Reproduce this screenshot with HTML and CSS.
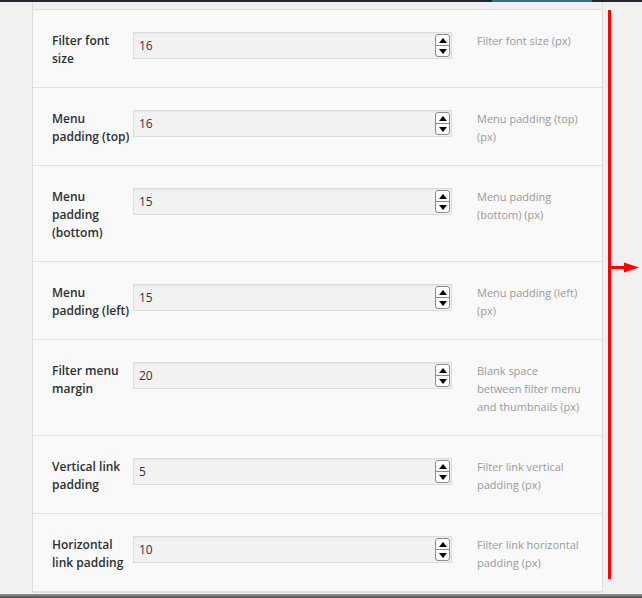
FILE: index.html
```html
<!DOCTYPE html>
<html>
<head>
<meta charset="utf-8">
<link rel="stylesheet" href="styles.css">
</head>
<body>
<div class="topbar"><div class="btn-edge"></div></div>
<div class="main">
  <div class="wrap">
    <div class="panel">
      <div class="row">
        <div class="label">Filter font size</div>
        <div class="field"><span class="val">16</span><span class="spin"><span class="up"><i></i></span><span class="down"><i></i></span></span></div>
        <div class="desc">Filter font size (px)</div>
      </div>
      <div class="row">
        <div class="label">Menu padding (top)</div>
        <div class="field"><span class="val">16</span><span class="spin"><span class="up"><i></i></span><span class="down"><i></i></span></span></div>
        <div class="desc">Menu padding (top) (px)</div>
      </div>
      <div class="row">
        <div class="label">Menu padding (bottom)</div>
        <div class="field"><span class="val">15</span><span class="spin"><span class="up"><i></i></span><span class="down"><i></i></span></span></div>
        <div class="desc">Menu padding (bottom) (px)</div>
      </div>
      <div class="row">
        <div class="label">Menu padding (left)</div>
        <div class="field"><span class="val">15</span><span class="spin"><span class="up"><i></i></span><span class="down"><i></i></span></span></div>
        <div class="desc">Menu padding (left) (px)</div>
      </div>
      <div class="row">
        <div class="label">Filter menu margin</div>
        <div class="field"><span class="val">20</span><span class="spin"><span class="up"><i></i></span><span class="down"><i></i></span></span></div>
        <div class="desc">Blank space between filter menu and thumbnails (px)</div>
      </div>
      <div class="row">
        <div class="label">Vertical link padding</div>
        <div class="field"><span class="val">5</span><span class="spin"><span class="up"><i></i></span><span class="down"><i></i></span></span></div>
        <div class="desc">Filter link vertical padding (px)</div>
      </div>
      <div class="row">
        <div class="label">Horizontal link padding</div>
        <div class="field"><span class="val">10</span><span class="spin"><span class="up"><i></i></span><span class="down"><i></i></span></span></div>
        <div class="desc">Filter link horizontal padding (px)</div>
      </div>
    </div>
  </div>
</div>
<div class="bottombar"></div>
<svg class="annot" width="40" height="580" viewBox="0 0 40 580">
  <rect x="0" y="0" width="3" height="569" fill="#ff0000"/>
  <rect x="3" y="256" width="14" height="3" fill="#ff0000"/>
  <polygon points="16,252.5 31,257.5 16,262.5" fill="#ff0000"/>
</svg>
</body>
</html>
```
FILE: styles.css
```css
html, body {
  margin: 0;
  padding: 0;
}
body {
  width: 642px;
  height: 598px;
  overflow: hidden;
  background: #f1f1f1;
  font-family: "Open Sans", "Liberation Sans", sans-serif;
  position: relative;
  display: flex;
  flex-direction: column;
}
.topbar {
  height: 2px;
  flex: none;
  background: #23282d;
  padding-left: 492px;
  display: flex;
}
.btn-edge {
  width: 100px;
  height: 2px;
  background: #336f91;
}
.main {
  height: 592px;
  flex: none;
  display: flex;
}
.wrap {
  margin-left: 32px;
  width: 571px;
  box-sizing: border-box;
  border-left: 1px solid #dedede;
  border-right: 1px solid #dedede;
  padding-top: 7px;
  background: #f0f0f0;
  height: 590px;
}
.panel {
  background: #f9f9f9;
  border-top: 1px solid #e2e2e2;
  box-shadow: 0 1px 1px rgba(0,0,0,0.06);
}
.row {
  display: flex;
  align-items: flex-start;
  padding: 22px 10px 19px 19px;
  border-bottom: 1px solid #e1e1e1;
}
.label {
  width: 79px;
  margin-right: 2px;
  flex: none;
  font-size: 12px;
  line-height: 18px;
  font-weight: 600;
  color: #2a2f33;
}
.field {
  width: 319px;
  height: 27px;
  flex: none;
  box-sizing: border-box;
  border: 1px solid #dcdcdc;
  background: #f2f2f2;
  box-shadow: inset 0 1px 2px rgba(0,0,0,0.05);
  display: flex;
  align-items: center;
  padding: 0 1px 0 5px;
  font-size: 12px;
  color: #333;
}
.val {
  flex: 1;
  line-height: 18px;
}
.spin {
  width: 15px;
  height: 23px;
  box-sizing: border-box;
  border: 1px solid #8c8c8c;
  border-radius: 3px;
  background: #fff;
  display: flex;
  flex-direction: column;
}
.spin .up, .spin .down {
  flex: 1;
  display: flex;
  align-items: center;
  justify-content: center;
}
.spin .up {
  border-bottom: 1px solid #8c8c8c;
}
.spin .up i {
  width: 0;
  height: 0;
  border-left: 4px solid transparent;
  border-right: 4px solid transparent;
  border-bottom: 5px solid #000;
}
.spin .down i {
  width: 0;
  height: 0;
  border-left: 4px solid transparent;
  border-right: 4px solid transparent;
  border-top: 5px solid #000;
}
.desc {
  margin-left: 25px;
  width: 108px;
  flex: none;
  font-size: 11px;
  line-height: 18px;
  color: #999;
}
.bottombar {
  height: 4px;
  flex: none;
  background: linear-gradient(#9a9a9a, #4a4a4a);
}
.annot {
  position: absolute;
  left: 608px;
  top: 10px;
}
```
